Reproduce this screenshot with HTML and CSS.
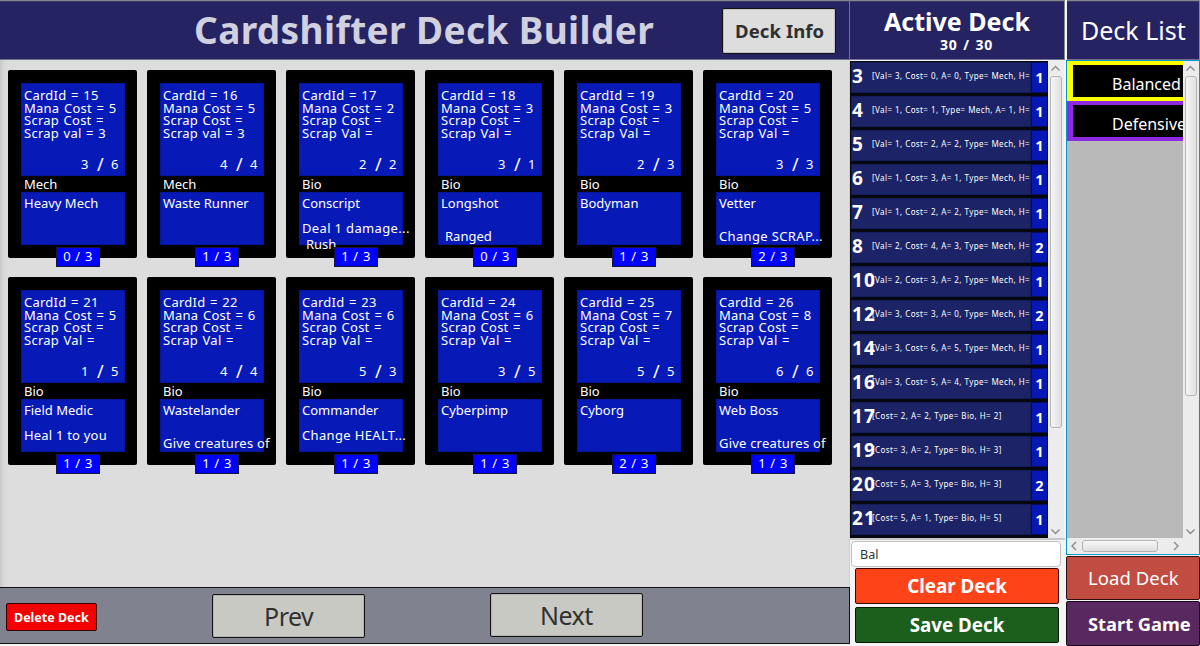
FILE: index.html
```html
<!DOCTYPE html>
<html lang="en">
<head>
<meta charset="utf-8">
<title>Cardshifter Deck Builder</title>
<link rel="stylesheet" href="styles.css">
</head>
<body>
<div class="app">
  <main class="builder">
    <header class="bar title-bar"><h1 class="title">Cardshifter Deck Builder</h1><button class="btn info">Deck Info</button></header>
    <section class="cards" id="cards"></section>
    <footer class="pager">
      <button class="btn delete">Delete Deck</button>
      <button class="btn page prev">Prev</button>
      <button class="btn page next">Next</button>
    </footer>
  </main>
  <section class="active">
    <header class="bar active-head"><h2 class="active-title">Active Deck</h2><p class="total">30 / 30</p></header>
    <div class="deck">
      <div class="rows" id="rows"></div>
      <div class="vscroll">
        <svg class="arrow" viewBox="0 0 16 14"><path d="M3.500 9.500 L7.500 5.500 L11.500 9.500"/></svg>
        <div class="thumb deck-thumb"></div>
        <svg class="arrow" viewBox="0 0 16 14"><path d="M3.500 5.500 L7.500 9.500 L11.500 5.500"/></svg>
      </div>
    </div>
    <div class="field">Bal</div>
    <button class="btn clear">Clear Deck</button>
    <button class="btn save">Save Deck</button>
  </section>
  <aside class="lists">
    <header class="bar lists-head"><h2 class="lists-title">Deck List</h2></header>
    <div class="listbox">
      <div class="listbody">
        <div class="items">
          <div class="item selected"><span class="item-name">Balanced</span></div>
          <div class="item other"><span class="item-name">Defensive</span></div>
        </div>
        <div class="vscroll list-scroll">
          <svg class="arrow" viewBox="0 0 16 14"><path d="M3.500 9.500 L7.500 5.500 L11.500 9.500"/></svg>
          <div class="thumb list-thumb"></div>
          <svg class="arrow" viewBox="0 0 16 14"><path d="M3.500 5.500 L7.500 9.500 L11.500 5.500"/></svg>
        </div>
      </div>
      <div class="hscroll">
        <svg class="harrow" viewBox="0 0 15 16"><path d="M9 4 L5 8 L9 12"/></svg>
        <div class="hthumb"></div>
        <svg class="harrow right" viewBox="0 0 15 16"><path d="M4 4 L8 8 L4 12"/></svg>
      </div>
    </div>
    <button class="btn load">Load Deck</button>
    <button class="btn start">Start Game</button>
  </aside>
</div>
<script src="app.js"></script>
</body>
</html>
```
FILE: styles.css
```css
* { box-sizing: border-box; margin: 0; padding: 0; }
body { width: 1200px; height: 646px; overflow: hidden; background: #f4f4f4; font-family: "Noto Sans", "Open Sans", sans-serif; color: #fff; white-space: nowrap; }
.app { display: grid; grid-template-columns: 850px 216px 134px; height: 646px; }
.bar { height: 60px; background: #262363; border-top: 1px solid #85858c; border-bottom: 1px solid #72718e; box-shadow: inset 0 1px #3d3b6c; }
.btn { display: block; border: 1px solid #111; border-radius: 2px; color: #fff; font-family: inherit; white-space: nowrap; text-align: left; }

.builder { display: flex; flex-direction: column; height: 646px; }
.title-bar { display: flex; padding: 8px 0 0 194px; border-right: 1px solid #72718e; }
.title { width: 528px; font-size: 37px; line-height: 42px; color: #d0d0df; letter-spacing: .38px; }
.info { width: 114px; height: 46px; padding-left: 12px; margin-top: -1px; background: #ddd; color: #2f2f2f; font-size: 18.5px; font-weight: 700; line-height: 42px; letter-spacing: .1px; box-shadow: inset 0 0 0 1px #c2c2c2; }
.cards { height: 527px; padding: 10px 0 0 8px; background: linear-gradient(90deg, #c8c8c8, #d8d8d8 4px, #ddd 9px); border-right: 1px solid #d0d0d0; display: grid; grid-template-columns: repeat(6, 129px); grid-auto-rows: 188px; gap: 19px 10px; align-content: start; }
.card { position: relative; padding: 13px; background: #000; border-radius: 2px; font-size: 13px; }
.stats { width: 104px; height: 93px; padding: 6px 0 0 3px; background: #071ab8; box-shadow: inset 0 0 0 1px #06159b; }
.stat { height: 12.67px; line-height: 12.67px; word-spacing: .9px; letter-spacing: .25px; }
.power { display: flex; height: 20px; margin-top: 14px; padding-left: 57px; line-height: 20px; }
.attack { width: 15px; }
.slash { width: 15px; padding-left: 1px; font-size: 18px; line-height: 21px; }
.health { line-height: 21px; }
.kind { height: 16px; line-height: 16px; padding-left: 3px; }
.body { width: 104px; height: 53px; padding: 2px 0 0 3px; background: #071ab8; box-shadow: inset 0 0 0 1px #06159b; }
.name, .text, .keyword { height: 18px; line-height: 18px; }
.text { margin-top: 7px; letter-spacing: .2px; }
.text.dots { letter-spacing: .35px; }
.text.low { margin-top: 15px; }
.keyword { margin-top: -2px; padding-left: 4px; }
.keyword.alone { margin-top: 15px; }
.badge { position: absolute; left: 48px; top: 177px; width: 44px; height: 20px; background: #0000fd; border: 1px solid #15153e; text-align: center; line-height: 17px; word-spacing: .6px; letter-spacing: .4px; }
.pager { display: flex; height: 57px; padding-left: 6px; background: #80838f; border: solid #111; border-width: 1px 1px 1px 0; }
.delete { width: 91px; height: 28px; margin-top: 15px; padding-left: 7px; background: #f40000; border-color: #300; font-size: 12.5px; font-weight: 700; line-height: 27px; }
.page { width: 153px; height: 44px; background: #c8c9c2; color: #303030; font-size: 25px; line-height: 43px; box-shadow: inset 0 0 0 1px #b4b5ae; letter-spacing: -.5px; }
.prev { margin: 6px 0 0 115px; padding-left: 51px; }
.next { margin: 5px 0 0 125px; padding-left: 49px; line-height: 42px; }

.active { display: flex; flex-direction: column; }
.active-head { width: 215px; text-align: center; border-right: 1px solid #85858c; }
.active-title { font-size: 25px; line-height: 34px; margin-top: 3px; }
.total { padding-left: 19px; font-size: 14px; font-weight: 700; line-height: 18px; margin-top: -2px; letter-spacing: .8px; word-spacing: 1.2px; }
.deck { display: flex; width: 215px; height: 480px; padding-top: 1px; border-bottom: 2px solid #c8c8c8; }
.rows { width: 198px; overflow: hidden; background: #060810; }
.row { display: flex; height: 34px; padding: 1px 0 2px 1px; }
.row-main { position: relative; width: 180px; height: 31px; padding-left: 21px; background: #1c2366; box-shadow: inset 0 0 0 1px #141b59; }
.desc { display: block; font-size: 8px; line-height: 28px; letter-spacing: .39px; word-spacing: .2px; }
.cost { position: absolute; left: 1px; top: 0; font-size: 19px; font-weight: 700; line-height: 28px; letter-spacing: 1.1px; }
.count { width: 17px; height: 31px; border: 1px solid #0a0e50; background: #0717b5; text-align: center; font-size: 14.5px; font-weight: 700; line-height: 28px; }
.vscroll { width: 16px; display: flex; flex-direction: column; background: #ececec; }
.arrow { width: 16px; height: 14px; flex: none; }
.arrow path, .harrow path { fill: none; stroke: #8a8a8a; stroke-width: 1.4; }
.thumb { width: 12px; margin: 1px 0 auto 2px; border: 1px solid #b4b4b4; border-radius: 3px; background: linear-gradient(90deg, #f6f6f6, #dfdfdf); }
.deck-thumb { height: 352px; }
.field { width: 210px; height: 26px; margin: 1px 0 0 1px; padding-left: 8px; background: #fff; border: 1px solid #c2c2c2; border-radius: 4px; color: #333; font-size: 12.5px; line-height: 25px; }
.clear, .save { width: 204px; height: 36px; margin-left: 5px; font-size: 18.8px; font-weight: 700; line-height: 34px; text-align: center; }
.clear { margin-top: 1px; background: #ff4318; border-color: #3b0800; }
.save { margin-top: 3px; background: #1c5e1c; border-color: #031803; }

.lists { display: flex; flex-direction: column; width: 134px; overflow: hidden; }
.lists-head { margin-left: 1px; padding-left: 14px; border-right: 1px solid #85858c; }
.lists-title { font-size: 25px; font-weight: 400; line-height: 58px; }
.listbox { height: 495px; border: 1px solid #0096c9; }
.listbody { display: flex; height: 477px; }
.items { width: 116px; background: #b9b9b9; overflow: hidden; }
.item { height: 40px; padding: 4px 0 4px 6px; }
.selected { background: #ff0; }
.other { background: #8b2be2; }
.item-name { display: block; height: 32px; padding-left: 39px; background: #000; font-size: 16px; line-height: 38px; }
.list-scroll { height: 477px; }
.list-thumb { height: 320px; }
.hscroll { display: flex; align-items: center; height: 16px; background: #ececec; }
.harrow { width: 15px; height: 16px; }
.hthumb { width: 76px; height: 12px; border: 1px solid #b4b4b4; border-radius: 3px; background: linear-gradient(#f6f6f6, #dfdfdf); }
.right { margin-left: 12px; }
.load { width: 134px; height: 44px; margin-top: 1px; padding-left: 21px; background: #c04c42; border-color: #30100c; font-size: 18.5px; line-height: 42px; letter-spacing: .05px; }
.start { width: 134px; height: 45px; margin-top: 1px; padding-left: 21px; background: #592860; border-color: #170819; font-size: 18.3px; font-weight: 700; line-height: 44px; }
```
FILE: app.js
```js
// id, mana cost, scrap value label, attack, health, type, name, body lines [class, text], copies
const cards = [
  [15, 5, "val = 3", 3, 6, "Mech", "Heavy Mech", [], 0],
  [16, 5, "val = 3", 4, 4, "Mech", "Waste Runner", [], 1],
  [17, 2, "Val =", 2, 2, "Bio", "Conscript", [["text dots", "Deal 1 damage..."], ["keyword", "Rush"]], 1],
  [18, 3, "Val =", 3, 1, "Bio", "Longshot", [["keyword alone", "Ranged"]], 0],
  [19, 3, "Val =", 2, 3, "Bio", "Bodyman", [], 1],
  [20, 5, "Val =", 3, 3, "Bio", "Vetter", [["text dots low", "Change SCRAP..."]], 2],
  [21, 5, "Val =", 1, 5, "Bio", "Field Medic", [["text", "Heal 1 to you"]], 1],
  [22, 6, "Val =", 4, 4, "Bio", "Wastelander", [["text low", "Give creatures of"]], 1],
  [23, 6, "Val =", 5, 3, "Bio", "Commander", [["text dots", "Change HEALT..."]], 1],
  [24, 6, "Val =", 3, 5, "Bio", "Cyberpimp", [], 1],
  [25, 7, "Val =", 5, 5, "Bio", "Cyborg", [], 2],
  [26, 8, "Val =", 6, 6, "Bio", "Web Boss", [["text low", "Give creatures of"]], 1]
];
document.getElementById("cards").innerHTML = cards.map(([id, mana, scrap, atk, hp, kind, name, lines, copies]) => `
  <article class="card">
    <div class="stats">
      <p class="stat">CardId = ${id}</p><p class="stat">Mana Cost = ${mana}</p>
      <p class="stat">Scrap Cost =</p><p class="stat">Scrap ${scrap}</p>
      <div class="power"><span class="attack">${atk}</span><span class="slash">/</span><span class="health">${hp}</span></div>
    </div>
    <p class="kind">${kind}</p>
    <div class="body"><p class="name">${name}</p>${lines.map(([c, t]) => `<p class="${c}">${t}</p>`).join("")}</div>
    <span class="badge">${copies} / 3</span>
  </article>`).join("");

const rows = [
  [3, "[Val= 3, Cost= 0, A= 0, Type= Mech, H=", 1],
  [4, "[Val= 1, Cost= 1, Type= Mech, A= 1, H=", 1],
  [5, "[Val= 1, Cost= 2, A= 2, Type= Mech, H=", 1],
  [6, "[Val= 1, Cost= 3, A= 1, Type= Mech, H=", 1],
  [7, "[Val= 1, Cost= 2, A= 2, Type= Mech, H=", 1],
  [8, "[Val= 2, Cost= 4, A= 3, Type= Mech, H=", 2],
  [10, "[Val= 2, Cost= 3, A= 2, Type= Mech, H=", 1],
  [12, "[Val= 3, Cost= 3, A= 0, Type= Mech, H=", 2],
  [14, "[Val= 3, Cost= 6, A= 5, Type= Mech, H=", 1],
  [16, "[Val= 3, Cost= 5, A= 4, Type= Mech, H=", 1],
  [17, "[Cost= 2, A= 2, Type= Bio, H= 2]", 1],
  [19, "[Cost= 3, A= 2, Type= Bio, H= 3]", 1],
  [20, "[Cost= 5, A= 3, Type= Bio, H= 3]", 2],
  [21, "[Cost= 5, A= 1, Type= Bio, H= 5]", 1]
];
document.getElementById("rows").innerHTML = rows.map(([cost, desc, n]) => `
  <div class="row"><div class="row-main"><span class="desc">${desc}</span><span class="cost">${cost}</span></div><div class="count">${n}</div></div>`).join("");
```
